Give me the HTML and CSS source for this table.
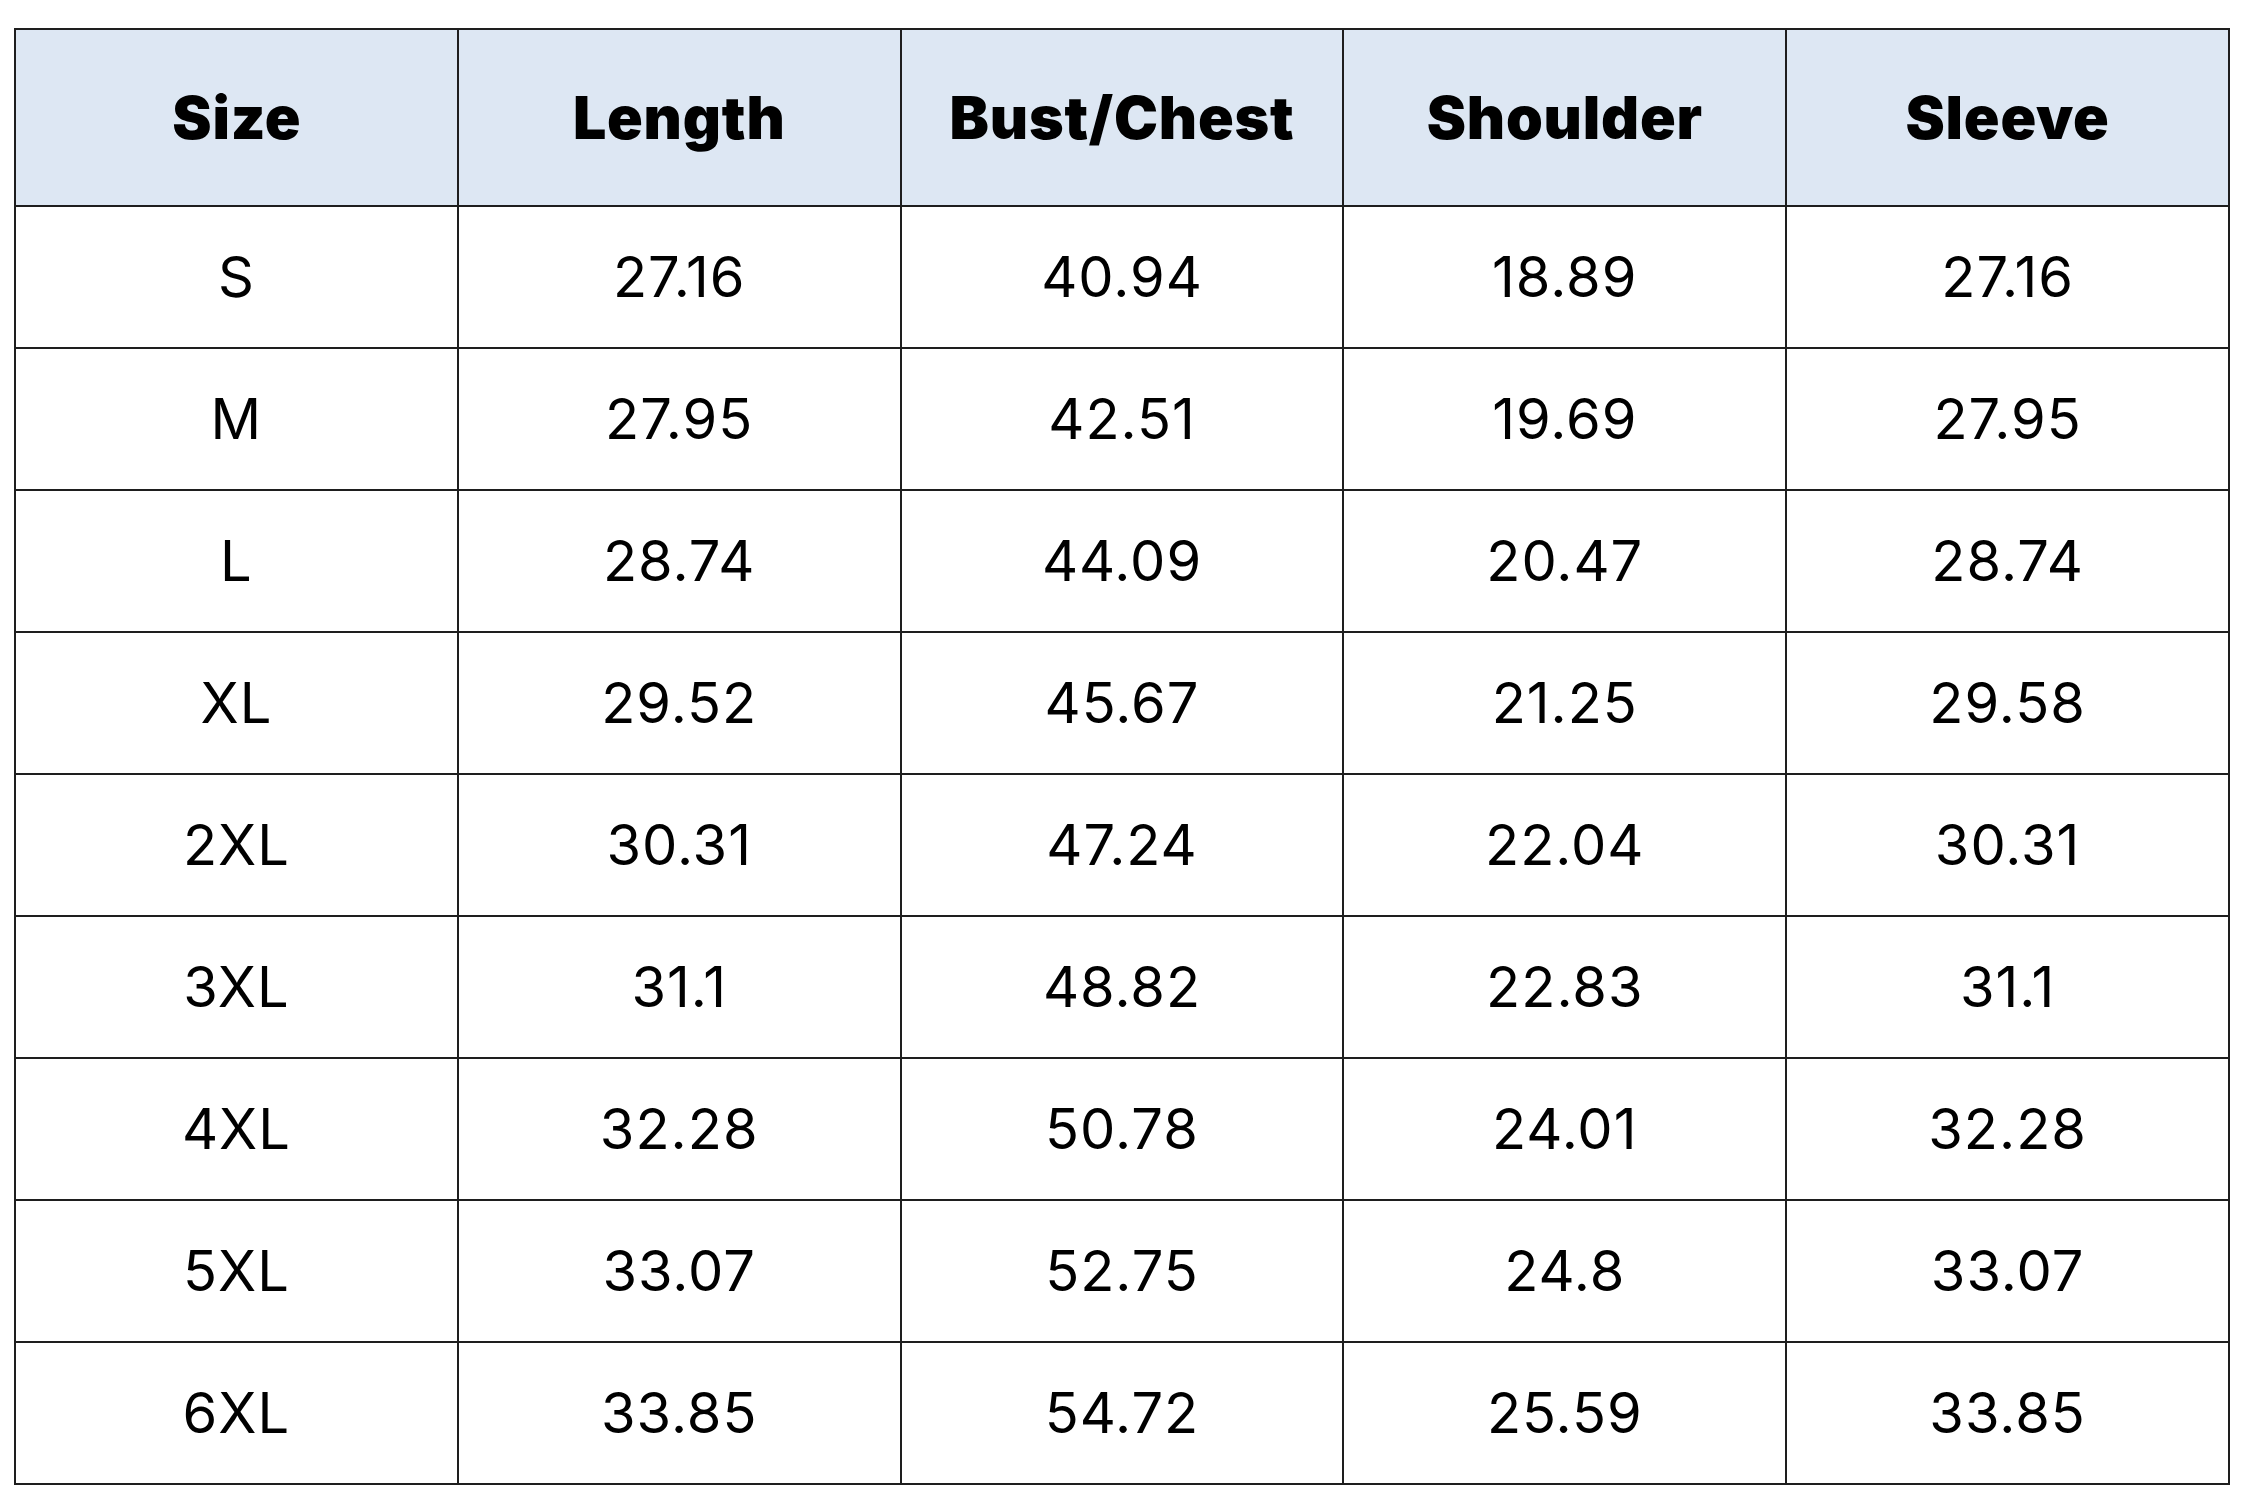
FILE: index.html
```html
<!DOCTYPE html>
<html lang="en">
<head>
<meta charset="utf-8">
<title>Size Chart</title>
<link rel="stylesheet" href="styles.css">
</head>
<body>
<div class="page">
<table class="size-table">
  <thead>
    <tr><th>Size</th><th>Length</th><th>Bust/Chest</th><th>Shoulder</th><th>Sleeve</th></tr>
  </thead>
  <tbody>
    <tr><td>S</td><td>27.16</td><td>40.94</td><td>18.89</td><td>27.16</td></tr>
    <tr><td>M</td><td>27.95</td><td>42.51</td><td>19.69</td><td>27.95</td></tr>
    <tr><td>L</td><td>28.74</td><td>44.09</td><td>20.47</td><td>28.74</td></tr>
    <tr><td>XL</td><td>29.52</td><td>45.67</td><td>21.25</td><td>29.58</td></tr>
    <tr><td>2XL</td><td>30.31</td><td>47.24</td><td>22.04</td><td>30.31</td></tr>
    <tr><td>3XL</td><td>31.1</td><td>48.82</td><td>22.83</td><td>31.1</td></tr>
    <tr><td>4XL</td><td>32.28</td><td>50.78</td><td>24.01</td><td>32.28</td></tr>
    <tr><td>5XL</td><td>33.07</td><td>52.75</td><td>24.8</td><td>33.07</td></tr>
    <tr><td>6XL</td><td>33.85</td><td>54.72</td><td>25.59</td><td>33.85</td></tr>
  </tbody>
</table>
</div>
</body>
</html>
```
FILE: styles.css
```css
html, body {
  margin: 0;
  padding: 0;
  background: #ffffff;
}
.page {
  padding: 28px 0 0 14px;
}
.size-table {
  width: 2216px;
  border-collapse: collapse;
  table-layout: fixed;
  font-family: Inter, "Liberation Sans", sans-serif;
  color: #000;
}
.size-table th,
.size-table td {
  border: 2px solid #1e1e1e;
  text-align: center;
  vertical-align: middle;
  padding: 0;
}
.size-table th {
  background: #dde7f3;
  height: 175px;
  font-size: 59px;
  font-weight: 900;
  letter-spacing: 0.8px;
}
.size-table th:first-child {
  padding-left: 1px;
}
.size-table td {
  height: 140px;
  font-size: 56px;
  font-weight: 400;
  letter-spacing: 1px;
}
```
